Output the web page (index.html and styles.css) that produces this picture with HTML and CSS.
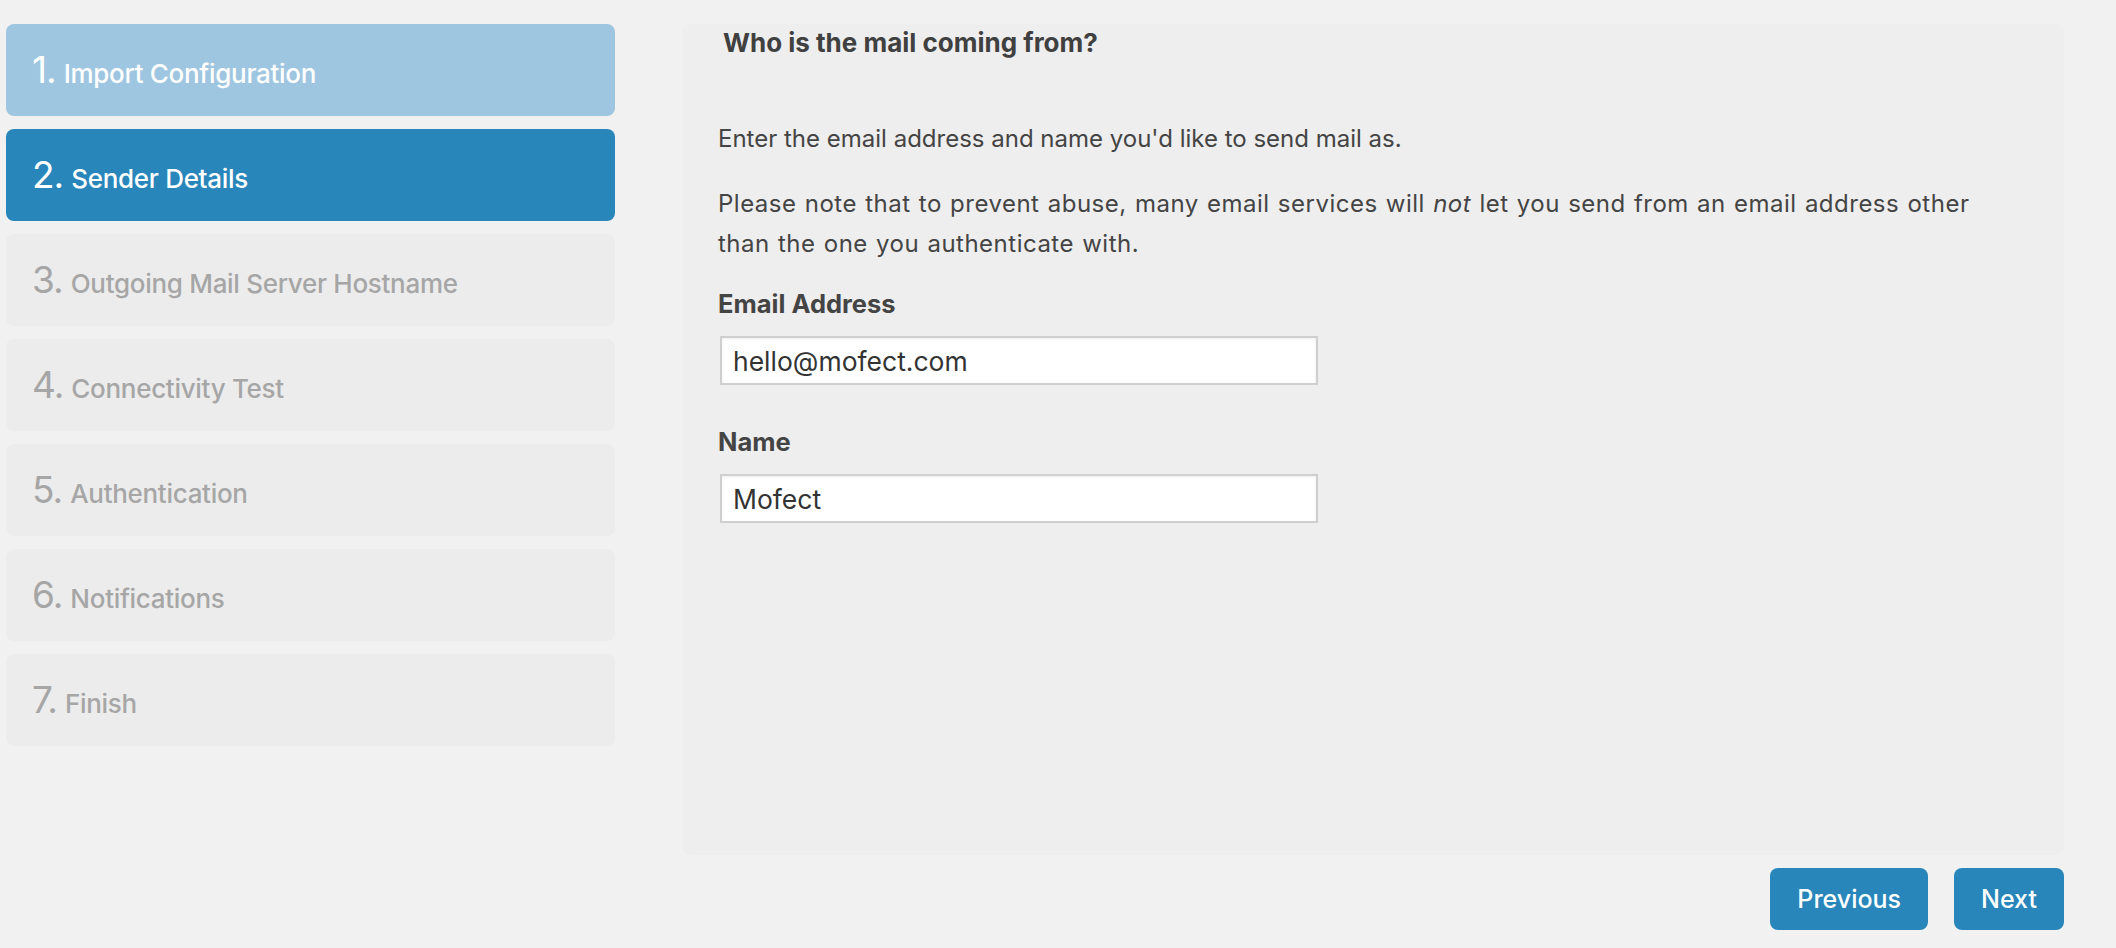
FILE: index.html
```html
<!DOCTYPE html>
<html lang="en">
<head>
<meta charset="utf-8">
<title>Setup Wizard - Sender Details</title>
<link rel="stylesheet" href="styles.css">
</head>
<body>
<div class="wizard">
  <ol class="steps">
    <li class="step done"><span class="num">1.</span> <span class="label">Import Configuration</span></li>
    <li class="step current"><span class="num">2.</span> <span class="label">Sender Details</span></li>
    <li class="step"><span class="num">3.</span> <span class="label">Outgoing Mail Server Hostname</span></li>
    <li class="step"><span class="num">4.</span> <span class="label">Connectivity Test</span></li>
    <li class="step"><span class="num">5.</span> <span class="label">Authentication</span></li>
    <li class="step"><span class="num">6.</span> <span class="label">Notifications</span></li>
    <li class="step"><span class="num">7.</span> <span class="label">Finish</span></li>
  </ol>
  <div class="main">
    <section class="panel">
      <h2 class="panel-title">Who is the mail coming from?</h2>
      <p class="text first">Enter the email address and name you'd like to send mail as.</p>
      <p class="text note">Please note that to prevent abuse, many email services will <em>not</em> let you send from an email address other than the one you authenticate with.</p>
      <label class="field-label" for="email">Email Address</label>
      <input class="field" id="email" type="text" value="hello@mofect.com">
      <label class="field-label second" for="name">Name</label>
      <input class="field" id="name" type="text" value="Mofect">
    </section>
    <div class="actions">
      <button class="btn" type="button">Previous</button>
      <button class="btn" type="button">Next</button>
    </div>
  </div>
</div>
</body>
</html>
```

FILE: styles.css
```css
* { box-sizing: border-box; }

html, body {
  margin: 0;
  padding: 0;
  background: #f1f1f1;
}

body {
  font-family: Inter, "Noto Sans", "Liberation Sans", sans-serif;
  color: #444;
  width: 2116px;
  height: 948px;
  overflow: hidden;
}

.wizard {
  display: grid;
  grid-template-columns: 609px 1382px;
  column-gap: 67px;
  padding: 24px 0 0 6px;
}

.steps {
  list-style: none;
  margin: 0;
  padding: 0;
  display: flex;
  flex-direction: column;
  gap: 13px;
}

.step {
  height: 92px;
  border-radius: 8px;
  background: #ececec;
  color: #a6a6a6;
  padding: 27px 0 0 26px;
  display: flex;
  align-items: baseline;
  gap: 8px;
  line-height: 1;
}

.step .num {
  font-size: 37px;
  letter-spacing: -1px;
}

.step .label {
  font-size: 26px;
  font-weight: 500;
  letter-spacing: -0.3px;
}

.step.done {
  background: #9fc6e0;
  color: #fff;
}

.step.current {
  background: #2886bb;
  color: #fff;
}

.main {
  display: flex;
  flex-direction: column;
}

.panel {
  height: 831px;
  background: #eeeeee;
  border-radius: 8px;
  padding: 4px 36px 0 36px;
  display: flex;
  flex-direction: column;
  align-items: flex-start;
}

.panel-title {
  margin: 0 0 0 5px;
  font-size: 26px;
  line-height: 30px;
  font-weight: 700;
  color: #404040;
}

.text {
  margin: 0;
  font-size: 24px;
  line-height: 37px;
  color: #444;
  max-width: 1300px;
}

.text.first {
  margin-top: 62px;
  margin-bottom: 27px;
}

.text.note {
  line-height: 40px;
  letter-spacing: 0.5px;
  word-spacing: 1px;
}

.text em {
  font-style: italic;
}

.field-label {
  margin-top: 21px;
  font-size: 25.5px;
  line-height: 37px;
  font-weight: 700;
  color: #444;
}

.field-label.second {
  margin-top: 38px;
}

.field {
  margin: 14px 0 0 2px;
  width: 598px;
  height: 49px;
  border: 2px solid #cfcfcf;
  background: #fff;
  box-shadow: inset 0 1px 3px rgba(0,0,0,0.07);
  padding: 0 11px;
  font-family: Inter, "Noto Sans", "Liberation Sans", sans-serif;
  font-size: 26.5px;
  color: #333;
  outline: none;
}

.actions {
  display: flex;
  justify-content: flex-end;
  gap: 26px;
  margin-top: 13px;
}

.btn {
  height: 62px;
  padding: 0 27px;
  border: none;
  border-radius: 8px;
  background: #2886bb;
  color: #fff;
  font-family: Inter, "Noto Sans", "Liberation Sans", sans-serif;
  font-size: 25px;
  font-weight: 500;
  cursor: pointer;
}
```
